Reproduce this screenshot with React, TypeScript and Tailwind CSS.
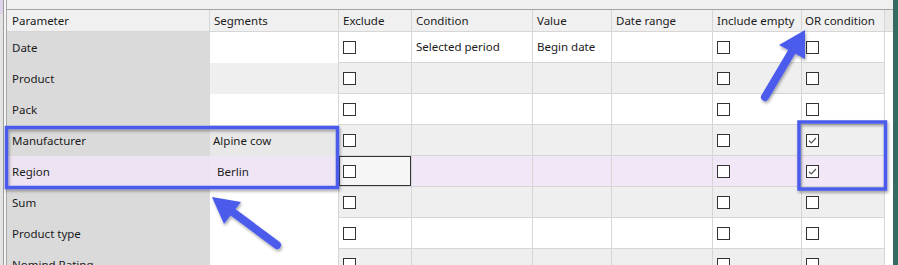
import React from 'react'

type Row = {
  name: string
  seg?: string
  cond?: string
  value?: string
  bg: string
  segBg: string
  orChecked?: boolean
  selected?: boolean
  focus?: boolean
}

const rows: Row[] = [
  { name: 'Date', cond: 'Selected period', value: 'Begin date', bg: 'bg-white', segBg: 'bg-white' },
  { name: 'Product', bg: 'bg-[#efefef]', segBg: 'bg-[#efefef]' },
  { name: 'Pack', bg: 'bg-white', segBg: 'bg-white' },
  { name: 'Manufacturer', seg: 'Alpine cow', bg: 'bg-[#efefef]', segBg: 'bg-[#e8e8e8]', orChecked: true },
  { name: 'Region', seg: 'Berlin', bg: 'bg-[#f1e7f6]', segBg: 'bg-[#efe5f4]', orChecked: true, selected: true, focus: true },
  { name: 'Sum', bg: 'bg-[#efefef]', segBg: 'bg-white' },
  { name: 'Product type', bg: 'bg-white', segBg: 'bg-white' },
  { name: 'Nomind Rating', bg: 'bg-[#efefef]', segBg: 'bg-white' },
]

const cols = 'grid grid-cols-[203px_129px_73px_121px_79px_101px_89px_83px_8px]'

function Checkbox({ checked }: { checked?: boolean }) {
  return (
    <span className="inline-flex w-[13px] h-[13px] border border-[#333] bg-white items-center justify-center">
      {checked && (
        <svg width="11" height="11" viewBox="0 0 11 11">
          <path d="M2 5.8 L4.3 8 L9 3" fill="none" stroke="#555" strokeWidth="1.2" />
        </svg>
      )}
    </span>
  )
}

function HeaderCell({ label, pad = 'pl-[4px]' }: { label: string; pad?: string }) {
  return (
    <div className={`flex items-center ${pad} border-r border-[#d6d6d6] whitespace-nowrap overflow-hidden`}>
      {label}
    </div>
  )
}

function GridRow({ r }: { r: Row }) {
  const paramBg = r.selected ? 'bg-[#ede3f2]' : 'bg-[#dadada]'
  const cell = `flex items-center pl-[4px] border-r border-b border-[#d6d6d6] ${r.bg}`
  return (
    <div className={`${cols} h-[31px] shrink-0`}>
      <div className={`flex items-center pl-[5px] ${paramBg}`}>{r.name}</div>
      <div className={`flex items-center ${r.selected ? 'pl-[7px]' : 'pl-[3px]'} border-r border-[#d6d6d6] ${r.segBg}`}>
        {r.seg}
      </div>
      <div className={`${cell} ${r.focus ? 'p-0' : ''}`}>
        {r.focus ? (
          <div className="flex items-center w-[72px] h-[30px] -ml-[4px] pl-[3px] border border-[#333] bg-[#f6f6f6]">
            <Checkbox />
          </div>
        ) : (
          <Checkbox />
        )}
      </div>
      <div className={cell}>{r.cond}</div>
      <div className={cell}>{r.value}</div>
      <div className={cell}></div>
      <div className={cell}>
        <Checkbox />
      </div>
      <div className={`${cell} pl-[3px]`}>
        <Checkbox checked={r.orChecked} />
      </div>
      <div className="bg-white"></div>
    </div>
  )
}

function Annotations() {
  const blue = '#4b5ced'
  return (
    <svg className="absolute inset-0 pointer-events-none" width="898" height="265">
      <defs>
        <filter id="sh" x="-20%" y="-20%" width="140%" height="140%">
          <feDropShadow dx="1" dy="2" stdDeviation="1.5" floodColor="#000" floodOpacity="0.35" />
        </filter>
      </defs>
      <g filter="url(#sh)" fill="none" stroke={blue} strokeWidth="3.5">
        <rect x="6.5" y="127.5" width="331" height="60" />
        <rect x="799" y="122" width="86.5" height="67" />
      </g>
      <g filter="url(#sh)">
        <line x1="765" y1="97" x2="794" y2="48" stroke={blue} strokeWidth="8" strokeLinecap="round" />
        <polygon points="805,30 805,59 779,45" fill={blue} />
        <line x1="277" y1="245" x2="230" y2="210" stroke={blue} strokeWidth="8" strokeLinecap="round" />
        <polygon points="212,197 241,202 224,224" fill={blue} />
      </g>
    </svg>
  )
}

export default function App() {
  return (
    <div
      className="relative w-[898px] h-[265px] overflow-hidden bg-[#f0f0f0] text-[11.5px] text-[#1b1b1b] flex"
      style={{ fontFamily: '"Noto Sans", "Segoe UI", sans-serif' }}
    >
      {/* left gutter */}
      <div className="flex w-[7px] shrink-0">
        <div className="w-[3px] flex flex-col">
          <div className="h-[14px] bg-[#ddd3ea]"></div>
          <div className="flex-1 bg-[#e4e4e4]"></div>
        </div>
        <div className="w-px bg-[#9c9c9c]"></div>
        <div className="w-[2px] bg-[#f5f5f5]"></div>
        <div className="w-px bg-[#a8a8a8]"></div>
      </div>

      {/* grid */}
      <div className="w-[886px] shrink-0 flex flex-col">
        <div className="h-[9px] shrink-0 bg-[#f0f0f0] border-b border-[#a3a3a3] box-content"></div>
        <div className={`${cols} h-[21px] shrink-0 bg-[#f0f0f0] border-b border-[#d6d6d6] box-content`}>
          <HeaderCell label="Parameter" pad="pl-[5px]" />
          <HeaderCell label="Segments" />
          <HeaderCell label="Exclude" />
          <HeaderCell label="Condition" />
          <HeaderCell label="Value" />
          <HeaderCell label="Date range" />
          <HeaderCell label="Include empty" />
          <HeaderCell label="OR condition" pad="pl-[3px]" />
          <div className="bg-[#e9e9e9]"></div>
        </div>
        {rows.map((r) => (
          <GridRow key={r.name} r={r} />
        ))}
      </div>

      {/* right edge */}
      <div className="w-[5px] shrink-0 bg-[#336b63]"></div>

      <Annotations />
    </div>
  )
}
